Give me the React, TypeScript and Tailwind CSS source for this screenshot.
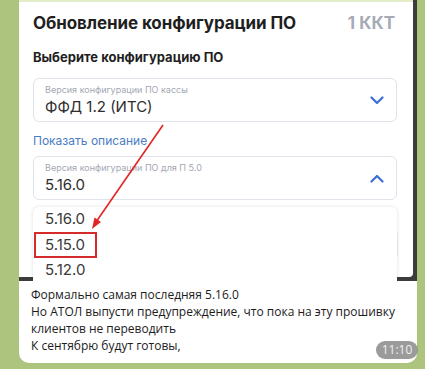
import React from "react";

const ui = { fontFamily: "Inter, 'Noto Sans', sans-serif" };
const tg = { fontFamily: "'Open Sans', 'Noto Sans', sans-serif" };

function Chevron({ up = false }: { up?: boolean }) {
  return (
    <svg width="14" height="9" viewBox="0 0 14 9" fill="none">
      <path
        d={up ? "M1.5 7.5 L7 2 L12.5 7.5" : "M1.5 1.5 L7 7 L12.5 1.5"}
        stroke="#3b6fd6"
        strokeWidth="2.2"
        strokeLinecap="round"
        strokeLinejoin="round"
      />
    </svg>
  );
}

function SelectBox({ label, value, up }: { label: string; value: string; up?: boolean }) {
  return (
    <div className="h-[44px] w-[364px] rounded-[6px] border border-[#dfe3ea] bg-white pl-[11px] pr-[12px] flex items-center justify-between">
      <div className="flex flex-col">
        <span className="text-[9px] leading-[12px] text-[#a3a8b2]">{label}</span>
        <span className="text-[15px] leading-[18px] text-[#2e2e2e] mt-[2px]">{value}</span>
      </div>
      <Chevron up={up} />
    </div>
  );
}

export default function App() {
  const options = ["5.16.0", "5.15.0", "5.12.0"];

  return (
    <div className="relative w-[425px] h-[369px] overflow-hidden bg-[#adc47f]">
      {/* message bubble */}
      <div className="relative ml-[19px] w-[398px] h-[363px] bg-white rounded-b-[10px]">
        {/* screenshot */}
        <div className="relative h-[281px] bg-[#3c3c3c] overflow-hidden" style={ui}>
          <div className="w-[394px] h-[277px] bg-white rounded-br-[4px] flex flex-col pl-[14px]">
            <div className="h-[2px] -ml-[14px] bg-[#e4edc9]" />
            <div className="flex items-center justify-between pr-[18px] mt-[10px]">
              <span className="text-[17px] leading-[22px] font-bold text-[#1f1f1f] tracking-[-0.1px]">
                Обновление конфигурации ПО
              </span>
              <span className="text-[17px] leading-[22px] font-bold text-[#a7abb6]">1 ККТ</span>
            </div>
            <span className="mt-[15px] text-[13px] leading-[16px] font-bold text-[#1f1f1f]">
              Выберите конфигурацию ПО
            </span>
            <div className="mt-[13px]">
              <SelectBox label="Версия конфигурации ПО кассы" value="ФФД 1.2 (ИТС)" />
            </div>
            <span className="mt-[11px] text-[12px] leading-[16px] text-[#4a7cc7]">Показать описание</span>
            <div className="mt-[7px]">
              <SelectBox label="Версия конфигурации ПО для П 5.0" value="5.16.0" up />
            </div>
          </div>

          {/* open dropdown */}
          <div className="absolute left-[14px] top-[207px] w-[364px] h-[80px] bg-white rounded-t-[6px] shadow-[0_0_4px_rgba(0,0,0,0.12)] flex flex-col">
            {options.map((o, i) => (
              <div
                key={o}
                className={
                  i === 1
                    ? "h-[26px] w-[63px] ml-[1px] border-2 border-[#d72a2a] flex items-center pl-[9px] text-[15px] text-[#3a3a3a]"
                    : "h-[25px] flex items-center pl-[12px] text-[15px] text-[#3a3a3a]"
                }
              >
                {o}
              </div>
            ))}
            <div className="absolute right-[-1px] top-[26px] w-[1px] h-[24px] bg-[#dfe4ec]" />
          </div>

          {/* red annotation arrow */}
          <svg className="absolute left-0 top-0" width="398" height="281">
            <line x1="144" y1="125" x2="77" y2="222" stroke="#e22424" strokeWidth="1.6" />
            <polygon points="73,229 82,222 75.5,217.5" fill="#e22424" />
          </svg>
        </div>

        {/* caption */}
        <div
          className="pl-[12px] pt-[5px] text-[12px] leading-[17px] whitespace-nowrap text-[#1c1c1c]"
          style={tg}
        >
          <div>Формально самая последняя 5.16.0</div>
          <div>Но АТОЛ выпусти предупреждение, что пока на эту прошивку</div>
          <div>клиентов не переводить</div>
          <div>К сентябрю будут готовы,</div>
        </div>

        <div
          className="absolute right-[-1px] top-[341px] h-[18px] w-[42px] rounded-full bg-[#8a8a8a]/85 flex items-center justify-center text-[12px] text-[#f0f0f0]"
          style={tg}
        >
          11:10
        </div>
      </div>
    </div>
  );
}
